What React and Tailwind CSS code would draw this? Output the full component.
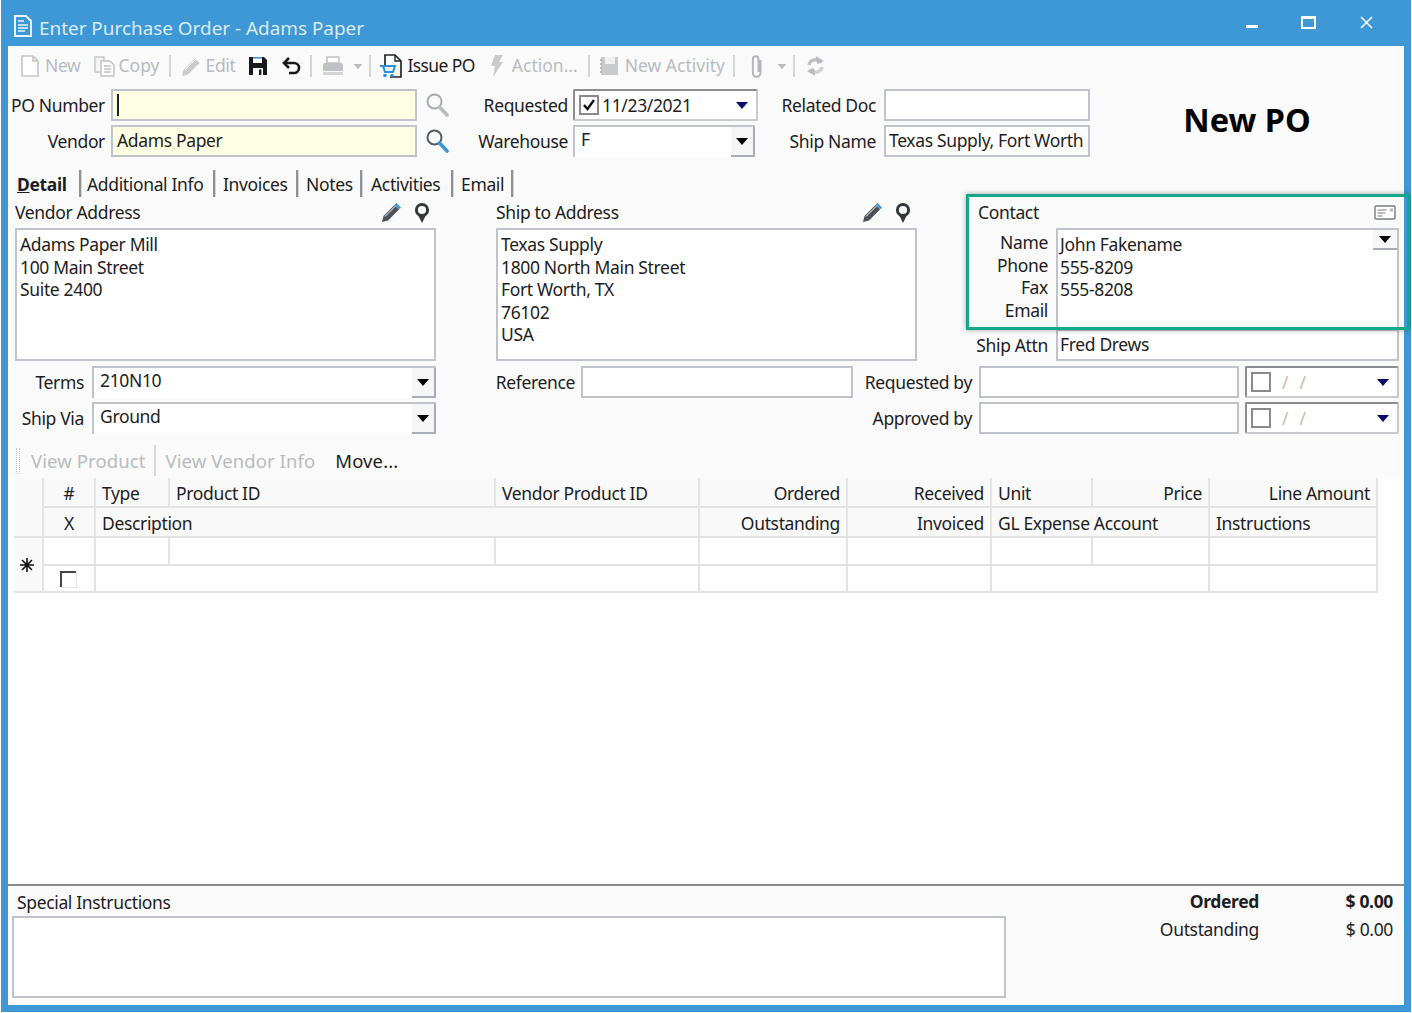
const ink = 'text-[#1d1d22]';

const Label = ({ w, children, className = '' }) => (
    <div className={`shrink-0 text-right leading-[32px] whitespace-nowrap ${ink} ${className}`} style={{ width: w }}>{children}</div>
);

const Box = ({ w, ml, bg = 'bg-white', children, className = 'pl-[4px]' }) => (
    <div
        className={`shrink-0 h-[32px] border-2 border-[#c0c4ca] ${bg} leading-[27px] ${ink} whitespace-nowrap overflow-hidden ${className}`}
        style={{ width: w, marginLeft: ml }}
    >
        {children}
    </div>
);

const Caret = ({ className = '' }) => (
    <svg width="12" height="7" viewBox="0 0 12 7" className={className}>
        <path d="M0 0h12L6 7z" fill="currentColor" />
    </svg>
);

const Combo = ({ w, ml, children }) => (
    <div className="relative shrink-0 h-[32px] bg-white border-l-2 border-t-2 border-[#c0c4ca]" style={{ width: w, marginLeft: ml }}>
        <div className={`pl-[6px] leading-[24px] ${ink}`}>{children}</div>
        <div className="absolute right-0 top-0 bottom-0 w-[24px] bg-[#f6f6f6] border-r-2 border-b-2 border-[#a9adb3] flex items-center justify-center text-black">
            <Caret />
        </div>
    </div>
);

const DateBox = ({ w, ml, checked, value }) => (
    <div
        className="shrink-0 h-[32px] flex items-center border-2 border-t-[#8b8d90] border-l-[#8b8d90] border-r-[#c8cace] border-b-[#c8cace] rounded-[2px] bg-white pl-[4px]"
        style={{ width: w, marginLeft: ml }}
    >
        <div className="w-[20px] h-[20px] shrink-0 border-2 border-[#8a8a8a] flex items-center justify-center bg-white">
            {checked && (
                <svg width="14" height="14" viewBox="0 0 14 14"><path d="M2 7l3.5 4L12 2" fill="none" stroke="#111" strokeWidth="2.4" /></svg>
            )}
        </div>
        {value
            ? <span className={`ml-[3px] ${ink}`}>{value}</span>
            : <span className="ml-[11px] text-[#cdb9a8] tracking-[11px]">//</span>}
        <Caret className="ml-auto mr-[8px] text-[#0a0a6a] mt-[1px]" />
    </div>
);

const SearchIcon = ({ active }) => (
    <svg width="24" height="26" viewBox="0 0 24 26" className="ml-[8px] shrink-0">
        <circle cx="9.5" cy="9.5" r="7" fill="none" stroke={active ? '#555b63' : '#a9acb0'} strokeWidth="2" />
        <path d="M14.5 15l7.5 8" stroke={active ? '#3f96d6' : '#b9bcc0'} strokeWidth="3.6" strokeLinecap="round" />
    </svg>
);

const PencilPin = () => (
    <div className="flex items-center">
        <svg width="22" height="22" viewBox="0 0 22 22">
            <path d="M2 20l1.5-6L14.5 3l4.5 4.5L8 18.5z" fill="#4d5157" />
            <path d="M14.5 3l2-2 4.5 4.5-2 2z" fill="#3f96d6" />
            <path d="M5 14.5L15.5 4" stroke="#fff" strokeWidth="1" />
        </svg>
        <svg width="16" height="22" viewBox="0 0 16 22" className="ml-[12px]">
            <circle cx="8" cy="8" r="5.6" fill="none" stroke="#33373c" strokeWidth="3" />
            <path d="M8 21L4 13h8z" fill="#33373c" />
        </svg>
    </div>
);

const Sep = ({ ml }) => <div className="w-[2px] h-[22px] bg-[#d4d4d4] shrink-0" style={{ marginLeft: ml }} />;

const Tab = ({ children, ml, w, pad, active }) => (
    <div className="flex h-[27px] shrink-0" style={{ marginLeft: ml }}>
        <span className={`${ink} leading-[29px] whitespace-nowrap ${active ? 'font-bold' : ''}`} style={{ width: w }}>{children}</span>
        <div className="w-[2px] bg-[#8e9094] shadow-[1px_0_0_#d6d6d6]" style={{ marginLeft: pad }} />
    </div>
);

const AddressBox = ({ w, lines }) => (
    <div className={`h-[133px] border-2 border-[#c0c4ca] bg-white pl-[3px] pt-[3px] leading-[22.5px] ${ink}`} style={{ width: w }}>
        {lines.map((l) => <div key={l}>{l}</div>)}
    </div>
);

const cell = 'border-r-2 border-b-2 border-[#e3e3e3] leading-[30px] whitespace-nowrap overflow-hidden';
const Head = ({ span, right, children }) => (
    <div
        className={`${cell} bg-[#f9f9f9] ${ink} ${right ? 'text-right pr-[6px]' : 'pl-[6px]'}`}
        style={{ gridColumn: span ? `span ${span}` : undefined }}
    >
        {children}
    </div>
);
const Empty = ({ span }) => <div className={`${cell} bg-white`} style={{ gridColumn: span ? `span ${span}` : undefined }} />;

export default function App() {
    return (
        <div className="w-[1412px] h-[1013px] bg-white overflow-hidden font-['Noto_Sans',sans-serif] text-[17.5px] tracking-[-0.35px]">
            <div className="relative w-[1410px] h-[1012px] ml-[1px] bg-[#3e98d5] flex flex-col px-[7px] pb-[7px]">
                {/* title bar */}
                <div className="h-[46px] shrink-0 flex items-center text-[#d9ebf7] text-[18.9px] tracking-normal">
                    <svg width="20" height="22" viewBox="0 0 20 22" className="ml-[5px] mt-[6px]">
                        <path d="M2 1h11l5 5v15H2z" fill="none" stroke="#e8f3fb" strokeWidth="2" />
                        <path d="M5 6h6M5 10h10M5 13h10M5 16h7" stroke="#e8f3fb" strokeWidth="1.6" />
                    </svg>
                    <span className="ml-[6px] mt-[10px]">Enter Purchase Order - Adams Paper</span>
                    <div className="ml-auto flex items-start -mt-[1px] mr-[31px]">
                        <div className="w-[12px] h-[3px] bg-white mt-[9px]" />
                        <div className="w-[15px] h-[13px] border-2 border-t-[3px] border-white ml-[43px]" />
                        <svg width="13" height="13" viewBox="0 0 13 13" className="ml-[44px]">
                            <path d="M1 1l11 11M12 1L1 12" stroke="#fff" strokeWidth="1.6" />
                        </svg>
                    </div>
                </div>

                <div className="flex-1 min-h-0 bg-[#fafafa] flex flex-col">
                    {/* toolbar */}
                    <div className="h-[40px] shrink-0 flex items-center text-[#b9bbbe] pl-[13px]">
                        <svg width="18" height="22" viewBox="0 0 18 22"><path d="M1 1h11l5 5v15H1zM12 1v5h5" fill="#fff" stroke="#c4c6c9" strokeWidth="1.6" /></svg>
                        <span className="ml-[6px] -mt-[2px]">New</span>
                        <svg width="21" height="21" viewBox="0 0 21 21" className="ml-[13px]">
                            <path d="M1 1h9v15H1z" fill="#f4f4f4" stroke="#c4c6c9" strokeWidth="1.4" />
                            <path d="M7 5h9l4 4v11H7z" fill="#fff" stroke="#bfc1c4" strokeWidth="1.4" />
                            <path d="M10 10h7M10 13h7M10 16h7" stroke="#bfc1c4" strokeWidth="1.3" />
                        </svg>
                        <span className="ml-[4px] -mt-[2px] tracking-normal">Copy</span>
                        <Sep ml="9px" />
                        <svg width="21" height="21" viewBox="0 0 21 21" className="ml-[10px]">
                            <path d="M1 20l1.5-6L14 2.5l4.5 4.5L7 18.5z" fill="#c8cacc" />
                            <path d="M4 14L15 3" stroke="#fff" />
                        </svg>
                        <span className="ml-[4px] -mt-[2px]">Edit</span>
                        <svg width="20" height="20" viewBox="0 0 20 20" className="ml-[13px]">
                            <path d="M1 1h15l3 3v15H1z" fill="#17191c" />
                            <path d="M5 1h9v6H5z" fill="#fff" />
                            <path d="M5 1h9v1.6H5z" fill="#3f96d6" />
                            <path d="M5 12h10v7H5z" fill="#fff" />
                            <path d="M11 13.5h2.4V19H11z" fill="#17191c" />
                        </svg>
                        <svg width="20" height="18" viewBox="0 0 20 18" className="ml-[14px]">
                            <path d="M7 1L2 6l5 5" fill="none" stroke="#17191c" strokeWidth="2.6" />
                            <path d="M3 6h9a5 5 0 0 1 0 10H7" fill="none" stroke="#17191c" strokeWidth="2.6" />
                        </svg>
                        <Sep ml="8px" />
                        <svg width="22" height="21" viewBox="0 0 22 21" className="ml-[10px]">
                            <path d="M5 1h12v6H5z" fill="#fff" stroke="#bfc1c4" strokeWidth="1.5" />
                            <path d="M1 9q0-2 2-2h16q2 0 2 2v6H1z" fill="#bfc1c4" />
                            <path d="M1 16h20v3H1z" fill="#d2d4d6" />
                        </svg>
                        <Caret className="ml-[8px] scale-75" />
                        <Sep ml="5px" />
                        <svg width="24" height="24" viewBox="0 0 24 24" className="ml-[8px]">
                            <path d="M6 11V1h10l6 6v16H11" fill="none" stroke="#23262a" strokeWidth="1.7" />
                            <path d="M16 1v6h6" fill="none" stroke="#23262a" strokeWidth="1.4" />
                            <path d="M1 12h3l2 6h8l2-6H5" fill="#e9f3fb" stroke="#2f8fd6" strokeWidth="2" />
                            <circle cx="6" cy="21.5" r="1.8" fill="#2f8fd6" />
                            <circle cx="13" cy="21.5" r="1.8" fill="#2f8fd6" />
                        </svg>
                        <span className={`ml-[4px] -mt-[2px] tracking-[-0.6px] ${ink}`}>Issue PO</span>
                        <svg width="12" height="22" viewBox="0 0 12 22" className="ml-[16px]">
                            <path d="M4 0h8L8 7h4L2 22l2-11H0z" fill="#c8cacc" />
                        </svg>
                        <span className="ml-[9px] -mt-[2px] tracking-normal">Action...</span>
                        <Sep ml="10px" />
                        <svg width="20" height="20" viewBox="0 0 20 20" className="ml-[9px]">
                            <path d="M2 1h17v18H2z" fill="#c8cacc" />
                            <path d="M6 1h10v7H6z" fill="#f0f0f0" />
                            <path d="M1 4h2M1 8h2M1 12h2M1 16h2" stroke="#a8aaad" strokeWidth="1.4" />
                        </svg>
                        <span className="ml-[6px] -mt-[2px] tracking-normal">New Activity</span>
                        <Sep ml="8px" />
                        <svg width="14" height="24" viewBox="0 0 14 24" className="ml-[15px]">
                            <path d="M10.5 6v13a3.8 3.8 0 0 1-7.6 0V5a2.8 2.8 0 0 1 5.6 0v13" fill="none" stroke="#b4b6b9" strokeWidth="2" />
                        </svg>
                        <Caret className="ml-[12px] scale-75" />
                        <Sep ml="5px" />
                        <svg width="19" height="20" viewBox="0 0 19 20" className="ml-[11px]">
                            <path d="M15 7a6.5 6.5 0 0 0-12 2" fill="none" stroke="#bfc1c4" strokeWidth="3.4" />
                            <path d="M4 13a6.5 6.5 0 0 0 12-2" fill="none" stroke="#cfd1d3" strokeWidth="3.4" />
                            <path d="M10 0l1 8 7-3zM9 20l-1-8-7 3z" fill="#b8babd" />
                        </svg>
                    </div>

                    {/* header form */}
                    <div className="mt-[3px] flex shrink-0">
                        <div className="flex flex-col gap-[4px]">
                            <div className="flex items-center">
                                <Label w="97px">PO Number</Label>
                                <Box w="306px" ml="6px" bg="bg-[#ffffe3]">
                                    <div className="w-[2px] h-[22px] bg-[#222] mt-[3px]" />
                                </Box>
                                <SearchIcon />
                                <Label w="119px">Requested</Label>
                                <DateBox w="185px" ml="5px" checked value="11/23/2021" />
                                <Label w="118px">Related Doc</Label>
                                <Box w="206px" ml="8px" />
                            </div>
                            <div className="flex items-center">
                                <Label w="97px">Vendor</Label>
                                <Box w="306px" ml="6px" bg="bg-[#ffffe3]">Adams Paper</Box>
                                <SearchIcon active />
                                <Label w="119px">Warehouse</Label>
                                <Combo w="182px" ml="5px">F</Combo>
                                <Label w="121px">Ship Name</Label>
                                <Box w="206px" ml="8px" className="pl-[3px]">Texas Supply, Fort Worth</Box>
                            </div>
                        </div>
                        <div className="flex-1 flex items-center justify-center text-[32.5px] font-bold text-black tracking-normal pb-[6px]">New PO</div>
                    </div>

                    {/* tabs */}
                    <div className="mt-[13px] flex shrink-0">
                        <Tab ml="9px" w="49px" pad="13px" active><span className="underline">D</span>etail</Tab>
                        <Tab ml="6px" w="118px" pad="8px">Additional Info</Tab>
                        <Tab ml="8px" w="65px" pad="8px">Invoices</Tab>
                        <Tab ml="8px" w="47px" pad="7px">Notes</Tab>
                        <Tab ml="9px" w="72px" pad="8px">Activities</Tab>
                        <Tab ml="8px" w="43px" pad="7px">Email</Tab>
                    </div>

                    {/* address blocks */}
                    <div className="flex shrink-0 h-[169px] pl-[7px]">
                        <div className="w-[421px]">
                            <div className="h-[31px] flex items-center">
                                <span className={ink}>Vendor Address</span>
                                <div className="ml-auto mr-[6px]"><PencilPin /></div>
                            </div>
                            <AddressBox w="421px" lines={['Adams Paper Mill', '100 Main Street', 'Suite 2400']} />
                        </div>
                        <div className="w-[421px] ml-[60px]">
                            <div className="h-[31px] flex items-center">
                                <span className={ink}>Ship to Address</span>
                                <div className="ml-auto mr-[6px]"><PencilPin /></div>
                            </div>
                            <AddressBox w="421px" lines={['Texas Supply', '1800 North Main Street', 'Fort Worth, TX', '76102', 'USA']} />
                        </div>
                        <div className="w-[421px] ml-[61px]">
                            <div className="h-[31px] flex items-center">
                                <span className={ink}>Contact</span>
                                <svg width="22" height="15" viewBox="0 0 22 15" className="ml-auto mr-[3px]">
                                    <rect x="1" y="1" width="20" height="13" rx="1" fill="#fff" stroke="#777b80" strokeWidth="1.4" />
                                    <path d="M3.5 5h9M3.5 8h8M3.5 11h5" stroke="#777b80" strokeWidth="1.2" />
                                    <rect x="16" y="3.5" width="3" height="3" fill="#b5b8bc" />
                                </svg>
                            </div>
                            <div className="flex">
                                <div className={`w-[70px] text-right pt-[3px] leading-[22.5px] ${ink}`}>
                                    <div>Name</div><div>Phone</div><div>Fax</div><div>Email</div>
                                </div>
                                <div className="relative ml-[8px] w-[343px] h-[101px] border-2 border-[#c0c4ca] bg-white pl-[2px] pt-[3px] leading-[22.5px]">
                                    <div className={ink}>John Fakename</div>
                                    <div className={ink}>555-8209</div>
                                    <div className={ink}>555-8208</div>
                                    <div className="absolute right-0 top-0 w-[24px] h-[20px] bg-[#f6f6f6] border-b-2 border-[#a9adb3] flex items-center justify-center text-black"><Caret /></div>
                                </div>
                            </div>
                            <div className="flex items-center">
                                <Label w="72px" className="-ml-[2px]">Ship Attn</Label>
                                <Box w="343px" ml="8px" className="pl-[2px]">Fred Drews</Box>
                            </div>
                        </div>
                    </div>

                    {/* terms rows */}
                    <div className="flex flex-col gap-[4px] shrink-0">
                        <div className="flex items-center">
                            <Label w="76px">Terms</Label>
                            <Combo w="344px" ml="8px">210N10</Combo>
                            <Label w="139px">Reference</Label>
                            <Box w="272px" ml="6px" />
                            <Label w="119px">Requested by</Label>
                            <Box w="260px" ml="7px" />
                            <DateBox w="154px" ml="6px" />
                        </div>
                        <div className="flex items-center">
                            <Label w="76px">Ship Via</Label>
                            <Combo w="344px" ml="8px">Ground</Combo>
                            <div className="w-[417px] shrink-0" />
                            <Label w="119px">Approved by</Label>
                            <Box w="260px" ml="7px" />
                            <DateBox w="154px" ml="6px" />
                        </div>
                    </div>

                    {/* grid toolbar */}
                    <div className="h-[33px] mt-[11px] pb-[2px] flex items-center shrink-0 text-[#b9bbbe] text-[18.5px] tracking-[0.1px]">
                        <div className="ml-[8px] w-[4px] h-[26px] border-x border-dotted border-[#c4c4c4]" />
                        <span className="ml-[11px]">View Product</span>
                        <div className="ml-[8px] w-[2px] h-[31px] bg-[#d8d8d8]" />
                        <span className="ml-[10px]">View Vendor Info</span>
                        <span className={`ml-[20px] ${ink}`}>Move...</span>
                    </div>

                    {/* lines grid */}
                    <div className="flex-1 min-h-0 bg-white pl-[6px]">
                        <div className="grid grid-cols-[30px_52px_74px_326px_204px_148px_144px_101px_117px_168px] grid-rows-[30px_30px_28px_27px]">
                            <div className={`${cell} row-span-2 bg-[#f9f9f9] border-b-0`} />
                            <div className={`${cell} bg-[#f9f9f9] ${ink} text-center`}>#</div>
                            <Head>Type</Head>
                            <Head>Product ID</Head>
                            <Head>Vendor Product ID</Head>
                            <Head right>Ordered</Head>
                            <Head right>Received</Head>
                            <Head>Unit</Head>
                            <Head right>Price</Head>
                            <Head right>Line Amount</Head>

                            <div className={`${cell} bg-[#f9f9f9] ${ink} text-center`}>X</div>
                            <Head span={3}>Description</Head>
                            <Head right>Outstanding</Head>
                            <Head right>Invoiced</Head>
                            <Head span={2}>GL Expense Account</Head>
                            <Head>Instructions</Head>

                            <div className={`${cell} row-span-2 bg-[#f9f9f9] flex items-center justify-center pr-[2px]`}>
                                <svg width="14" height="14" viewBox="0 0 14 14">
                                    <path d="M7 0v14M0 7h14M2 2l10 10M12 2L2 12" stroke="#111" strokeWidth="1.6" />
                                </svg>
                            </div>
                            <Empty /><Empty /><Empty /><Empty /><Empty /><Empty /><Empty /><Empty /><Empty />

                            <div className={`${cell} bg-white flex items-center justify-center pr-[2px]`}>
                                <div className="w-[16px] h-[16px] border-l-2 border-t-2 border-[#444] shadow-[1px_1px_0_#e4e4e4]" />
                            </div>
                            <Empty span={3} />
                            <Empty />
                            <Empty />
                            <Empty span={2} />
                            <Empty />
                        </div>
                    </div>

                    {/* totals */}
                    <div className="h-[121px] shrink-0 border-t-2 border-t-[#888a8c] bg-[#fafafa] flex pl-[4px]">
                        <div className="w-[994px]">
                            <div className={`h-[30px] pl-[5px] leading-[32px] ${ink}`}>Special Instructions</div>
                            <div className="h-[82px] border-2 border-[#c0c4ca] bg-white" />
                        </div>
                        <div className="flex-1 grid grid-cols-[253px_134px] auto-rows-[28px] pt-[1px] text-right">
                            <div className={`font-bold ${ink} leading-[28px]`}>Ordered</div>
                            <div className={`font-bold ${ink} leading-[28px]`}>$ 0.00</div>
                            <div className={`${ink} leading-[28px]`}>Outstanding</div>
                            <div className={`${ink} leading-[28px]`}>$ 0.00</div>
                        </div>
                    </div>
                </div>

                {/* annotation around the contact block */}
                <div className="absolute left-[965px] top-[194px] w-[444px] h-[136px] border-[3px] border-[#11a88a] shadow-[0_0_5px_rgba(0,0,0,0.35)] pointer-events-none" />
            </div>
        </div>
    );
}
